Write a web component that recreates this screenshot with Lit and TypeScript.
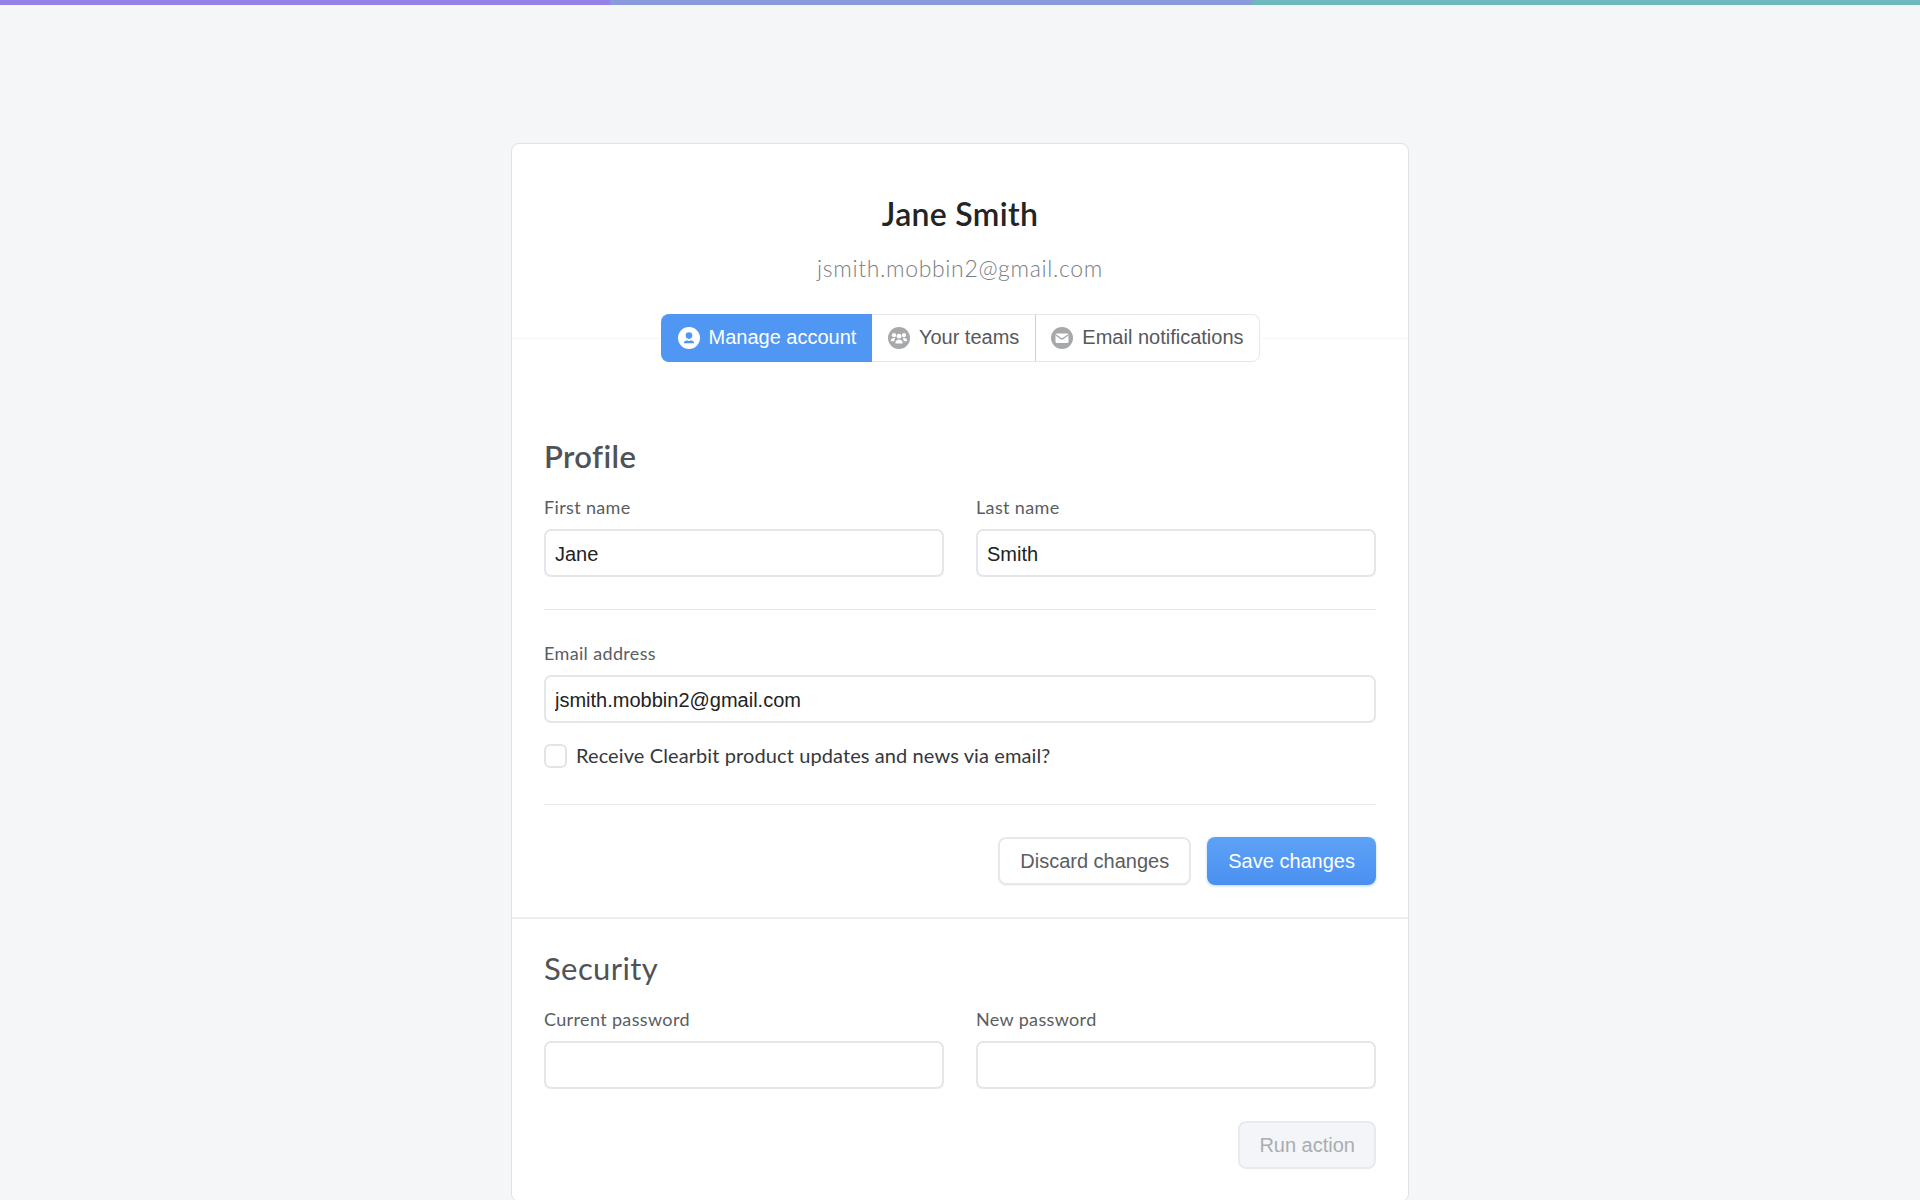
import { LitElement, html, css } from 'lit';
import { customElement } from 'lit/decorators.js';

const userIcon = html`<svg class="icon" viewBox="0 0 22 22">
  <circle cx="11" cy="11" r="11" fill="#fff"></circle>
  <circle cx="11" cy="8.600" r="3.300" fill="#4f97f2"></circle>
  <path d="M5.800 16.200c0-1.700 1.400-2.400 3.200-2.900.6.400 1.300.6 2 .6s1.400-.2 2-.6c1.800.5 3.200 1.200 3.200 2.900z" fill="#4f97f2"></path>
</svg>`;

const teamIcon = html`<svg class="icon" viewBox="0 0 22 22">
  <circle cx="11" cy="11" r="11" fill="#a6a8aa"></circle>
  <g fill="#fff">
    <circle cx="6" cy="8.200" r="2.100"></circle>
    <circle cx="16" cy="8.200" r="2.100"></circle>
    <path d="M2.800 14.200c0-2.200 1.200-3.300 3.100-3.300.6 0 1 .1 1.400.3-.7.800-1 1.800-1 3z"></path>
    <path d="M19.200 14.200c0-2.200-1.200-3.300-3.100-3.300-.6 0-1 .1-1.400.3.700.8 1 1.800 1 3z"></path>
    <circle cx="11" cy="9.200" r="2.400"></circle>
    <path d="M7.300 16.400c0-2.600 1.500-4 3.700-4s3.700 1.400 3.700 4z"></path>
  </g>
</svg>`;

const mailIcon = html`<svg class="icon" viewBox="0 0 22 22">
  <circle cx="11" cy="11" r="11" fill="#a6a8aa"></circle>
  <rect x="4.500" y="6.500" width="13" height="9.500" rx="1.500" fill="#fff"></rect>
  <path d="M4.800 8l6.200 4.200L17.200 8" fill="none" stroke="#a6a8aa" stroke-width="1.400"></path>
</svg>`;

@customElement('app-root')
export class AppRoot extends LitElement {

  static styles = css`
    :host {
      display: block;
      height: 1200px;
      overflow: hidden;
      background: #f4f6f8;
      font-family: 'Lato', 'Open Sans', sans-serif;
    }

    .topbar {
      height: 5px;
      background: linear-gradient(90deg, #9580ea 0, #9580ea 608px, #8a9bdc 612px, #8a9bdc 1250px, #6fb8bd 1254px, #6fb8bd 100%);
    }

    .card {
      box-sizing: border-box;
      width: 898px;
      margin: 138px auto 0;
      background: #fff;
      border: 1px solid #dfe3e6;
      border-radius: 8px;
    }

    .head {
      padding-top: 52px;
      text-align: center;
    }
    h1 {
      margin: 0;
      font-size: 32px;
      line-height: 36px;
      font-weight: 600;
      letter-spacing: 0.3px;
      color: #222426;
    }
    .mail {
      margin-top: 22px;
      font-size: 23px;
      line-height: 28px;
      font-weight: 300;
      letter-spacing: 0.65px;
      color: #7a7d81;
    }

    .tabrow {
      display: flex;
      align-items: center;
      margin-top: 32px;
    }
    .rule {
      flex: 1;
      height: 1px;
      background: #f6f7f8;
    }
    .tabs {
      display: flex;
      height: 48px;
      box-sizing: border-box;
      background: #fff;
      border-radius: 8px;
      font-family: 'Liberation Sans', Arial, sans-serif;
      font-size: 20px;
      color: #55585c;
    }
    .tab {
      display: flex;
      align-items: center;
      gap: 9px;
      padding: 0 15.5px 2px;
      border: 1px solid #e6e8eb;
      border-left: 0;
    }
    .tab:first-child {
      padding-left: 17px;
      padding-right: 15px;
      background: #4f97f2;
      border-color: #4f97f2;
      color: #fff;
      border-radius: 8px 0 0 8px;
    }
    .tab:last-child {
      padding-right: 15px;
      border-radius: 0 8px 8px 0;
    }
    .tab:nth-child(2) {
      border-right-color: #cfd2d5;
    }
    .icon {
      width: 22px;
      height: 22px;
      flex: none;
      margin-top: 2px;
    }

    section {
      padding: 0 32px 32px;
    }
    section.profile {
      padding-top: 76px;
      border-bottom: 2px solid #eceef0;
    }
    section.security {
      padding-top: 31px;
    }

    h2 {
      margin: 0 0 22px;
      font-size: 31px;
      line-height: 36px;
      letter-spacing: 0.4px;
      color: #4f5256;
    }
    .profile h2 {
      font-weight: 600;
    }
    .security h2 {
      font-weight: 400;
    }

    .cols {
      display: grid;
      grid-template-columns: 1fr 1fr;
      gap: 32px;
    }
    label {
      display: block;
      margin-bottom: 11px;
      font-size: 18px;
      line-height: 22px;
      letter-spacing: 0.35px;
      color: #5a5d61;
    }
    input.text {
      display: block;
      box-sizing: border-box;
      width: 100%;
      height: 48px;
      padding: 2px 9px 0;
      background: #fff;
      border: 2px solid #e4e6e9;
      border-radius: 7px;
      font-family: 'Liberation Sans', Arial, sans-serif;
      font-size: 20px;
      color: #222;
      outline: none;
    }

    hr {
      height: 1px;
      margin: 32px 0;
      border: 0;
      background: #e6e8ea;
    }

    .check {
      display: flex;
      align-items: flex-start;
      gap: 9px;
      margin-top: 21px;
      font-size: 20px;
      line-height: 22px;
      letter-spacing: 0.1px;
      color: #35383b;
    }
    .box {
      box-sizing: border-box;
      width: 23px;
      height: 24px;
      background: #fff;
      border: 2px solid #e2e4e7;
      border-radius: 6px;
    }
    .check + hr {
      margin-top: 36px;
    }

    .actions {
      display: flex;
      justify-content: flex-end;
      gap: 16px;
    }
    .actions.spaced {
      margin-top: 32px;
    }
    button {
      box-sizing: border-box;
      height: 48px;
      padding: 0 20px;
      border-radius: 8px;
      font-family: 'Liberation Sans', Arial, sans-serif;
      font-size: 20px;
    }
    .ghost {
      background: #fff;
      border: 2px solid #e6e8eb;
      color: #5a5d61;
      box-shadow: 0 1px 1px rgba(0, 0, 0, 0.05);
    }
    .primary {
      padding: 0 21px;
      background: linear-gradient(#5ea2f6, #4a90f1);
      border: 0;
      color: #fff;
      box-shadow: 0 1px 3px rgba(74, 144, 241, 0.4);
    }
    .disabled {
      padding: 0 19px;
      background: #f3f5f8;
      border: 2px solid #e8eaed;
      color: #a9adb2;
    }
  `;

  render () {

    return html`
      <div class="topbar"></div>
      <div class="card">
        <div class="head">
          <h1>Jane Smith</h1>
          <div class="mail">jsmith.mobbin2@gmail.com</div>
          <div class="tabrow">
            <div class="rule"></div>
            <div class="tabs">
              <div class="tab">${userIcon}Manage account</div>
              <div class="tab">${teamIcon}Your teams</div>
              <div class="tab">${mailIcon}Email notifications</div>
            </div>
            <div class="rule"></div>
          </div>
        </div>

        <section class="profile">
          <h2>Profile</h2>
          <div class="cols">
            <div>
              <label>First name</label>
              <input class="text" value="Jane" />
            </div>
            <div>
              <label>Last name</label>
              <input class="text" value="Smith" />
            </div>
          </div>
          <hr />
          <label>Email address</label>
          <input class="text" value="jsmith.mobbin2@gmail.com" />
          <div class="check">
            <span class="box"></span>
            <span>Receive Clearbit product updates and news via email?</span>
          </div>
          <hr />
          <div class="actions">
            <button class="ghost">Discard changes</button>
            <button class="primary">Save changes</button>
          </div>
        </section>

        <section class="security">
          <h2>Security</h2>
          <div class="cols">
            <div>
              <label>Current password</label>
              <input class="text" />
            </div>
            <div>
              <label>New password</label>
              <input class="text" />
            </div>
          </div>
          <div class="actions spaced">
            <button class="disabled">Run action</button>
          </div>
        </section>
      </div>
    `;

  }

}
